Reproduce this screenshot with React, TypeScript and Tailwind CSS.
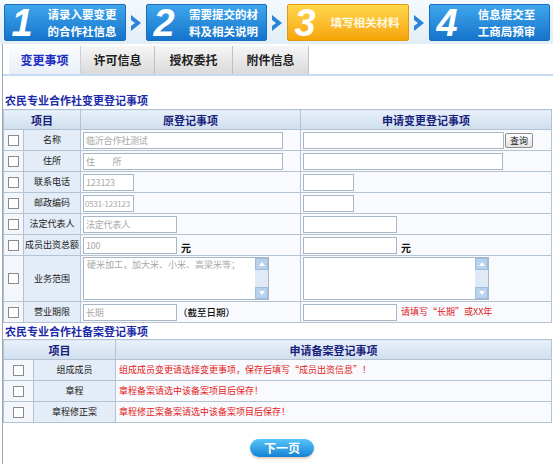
import React from "react";

const font = { fontFamily: '"Noto Sans CJK SC", "Liberation Sans", sans-serif' };

function Chevron() {
  return (
    <div className="w-[20px] flex items-center justify-center">
      <svg width="14" height="20" viewBox="0 0 14 20">
        <path d="M2 2 L12 10 L2 18 L2 13 L6 10 L2 7 Z" fill="#2a86d8" />
      </svg>
    </div>
  );
}

function Step({ n, lines, width, orange }: { n: string; lines: string[]; width: string; orange?: boolean }) {
  return (
    <div
      className={`${width} h-[37px] flex items-center rounded-[2px] border ${
        orange
          ? "bg-gradient-to-b from-[#ffd84a] to-[#f7a400] border-[#e09a10]"
          : "bg-gradient-to-b from-[#3fa6ec] to-[#1474cc] border-[#1a6cbc]"
      }`}
    >
      <span
        className="w-[34px] text-center text-[38px] leading-none font-bold italic text-white"
        style={{ fontFamily: '"Liberation Sans", sans-serif' }}
      >
        {n}
      </span>
      <div className={`flex-1 flex flex-col items-center text-[11.5px] leading-[17px] font-bold ${orange ? "text-[#fff8e0]" : "text-white"}`}>
        {lines.map((l) => (
          <span key={l}>{l}</span>
        ))}
      </div>
    </div>
  );
}

function Box() {
  return <span className="inline-block w-[11px] h-[11px] border border-[#8a8a8a] bg-white" />;
}

function Input({ w, value, small }: { w: string; value?: string; small?: boolean }) {
  return (
    <div
      className={`${w} h-[17px] border border-[#a9b6c4] bg-white ${small ? "text-[8px] px-[1px]" : "text-[9px] px-[2px]"} leading-[15px] text-[#a8a8a8] overflow-hidden whitespace-nowrap tracking-[-0.2px]`}
    >
      {value}
    </div>
  );
}

function TextArea({ value }: { value?: string }) {
  return (
    <div className="w-[186px] h-[43px] border border-[#a9b6c4] bg-white flex">
      <div className="flex-1 text-[9px] leading-[14px] text-[#a8a8a8] px-[3px] overflow-hidden whitespace-nowrap">{value}</div>
      <div className="w-[13px] bg-[#dfeaf6] flex flex-col justify-between">
        <div className="h-[12px] bg-[#b8d2ec] border border-[#9cbce0] flex items-center justify-center">
          <svg width="6" height="4" viewBox="0 0 6 4"><path d="M0 4 L3 0 L6 4 Z" fill="#fff" /></svg>
        </div>
        <div className="h-[12px] bg-[#b8d2ec] border border-[#9cbce0] flex items-center justify-center">
          <svg width="6" height="4" viewBox="0 0 6 4"><path d="M0 0 L3 4 L6 0 Z" fill="#fff" /></svg>
        </div>
      </div>
    </div>
  );
}

const th = "border border-[#b4c3d2] bg-gradient-to-b from-[#e9f1fa] to-[#cfdeee] text-[#17207a] text-[11px] leading-[14px] font-bold text-center";
const tdBox = "border border-[#b4c3d2] bg-[#f3f7fc] text-center";
const tdItem = "border border-[#b4c3d2] bg-[#e3ecf7] text-center text-[9px] leading-[12px] text-[#222] whitespace-nowrap";
const tdVal = "border border-[#b4c3d2] bg-[#f8fafd] px-[2px]";

type Row = { label: string; orig: React.ReactNode; next: React.ReactNode; h?: string };

export default function App() {
  const rows: Row[] = [
    {
      label: "名称",
      orig: <Input w="w-[200px]" value="临沂合作社测试" />,
      next: (
        <div className="flex items-center">
          <Input w="w-[201px]" />
          <span className="ml-[1px] h-[15px] px-[4px] border border-[#8e8e8e] rounded-[2px] bg-gradient-to-b from-white to-[#e2e2e2] text-[9px] leading-[13px] text-[#222]">查询</span>
        </div>
      ),
    },
    { label: "住所", orig: <Input w="w-[200px]" value="住　　所" />, next: <Input w="w-[200px]" /> },
    { label: "联系电话", orig: <Input w="w-[51px]" value="123123" />, next: <Input w="w-[51px]" /> },
    { label: "邮政编码", orig: <Input w="w-[51px]" value="0531-123123" small />, next: <Input w="w-[51px]" /> },
    { label: "法定代表人", orig: <Input w="w-[94px]" value="法定代表人" />, next: <Input w="w-[94px]" /> },
    {
      label: "成员出资总额",
      orig: (
        <div className="flex items-end gap-[4px]">
          <Input w="w-[94px]" value="100" />
          <span className="text-[10px] font-bold text-[#111] leading-[13px]">元</span>
        </div>
      ),
      next: (
        <div className="flex items-end gap-[4px]">
          <Input w="w-[94px]" />
          <span className="text-[10px] font-bold text-[#111] leading-[13px]">元</span>
        </div>
      ),
    },
    {
      label: "业务范围",
      orig: <TextArea value="硬米加工，加大米、小米、高梁米等；" />,
      next: <TextArea />,
      h: "h-[46px]",
    },
    {
      label: "营业期限",
      orig: (
        <div className="flex items-center gap-[1px]">
          <Input w="w-[94px]" value="长期" />
          <span className="text-[9.5px] font-medium text-[#111]">（截至日期）</span>
        </div>
      ),
      next: (
        <div className="flex items-center gap-[4px]">
          <Input w="w-[94px]" />
          <span className="text-[9px] text-[#e02020]">请填写“长期”或XX年</span>
        </div>
      ),
      h: "h-[21px]",
    },
  ];

  const rows2 = [
    { label: "组成成员", text: "组成成员变更请选择变更事项，保存后填写“成员出资信息”！" },
    { label: "章程", text: "章程备案请选中该备案项目后保存！" },
    { label: "章程修正案", text: "章程修正案备案请选中该备案项目后保存！" },
  ];

  return (
    <div className="w-[553px] h-[464px] bg-white overflow-hidden" style={font}>
      <div className="h-[44px] bg-gradient-to-b from-[#f4f9fd] to-[#e2eef8] flex items-center pl-[4px] pt-[1px]">
        <Step n="1" lines={["请录入要变更", "的合作社信息"]} width="w-[122px]" />
        <Chevron />
        <Step n="2" lines={["需要提交的材", "料及相关说明"]} width="w-[121px]" />
        <Chevron />
        <Step n="3" lines={["填写相关材料"]} width="w-[122px]" orange />
        <Chevron />
        <Step n="4" lines={["信息提交至", "工商局预审"]} width="w-[121px]" />
      </div>

      <div className="ml-[2px] border-l border-[#9aa8b8] h-[420px]">
        <div className="pt-[2px] pl-[6px] flex border-b-2 border-[#c8daf0] h-[32px]">
          <div className="w-[72px] flex items-center justify-center bg-gradient-to-b from-[#fafcff] to-[#e9eff6] border-r border-[#c8d0da] text-[12px] font-bold text-[#1b2cc0]">变更事项</div>
          <div className="w-[74px] flex items-center justify-center bg-gradient-to-b from-[#f6f6f6] to-[#dadada] border-r border-[#c0c0c0] text-[12px] font-bold text-[#222]">许可信息</div>
          <div className="w-[78px] flex items-center justify-center bg-gradient-to-b from-[#f6f6f6] to-[#dadada] border-r border-[#c0c0c0] text-[12px] font-bold text-[#222]">授权委托</div>
          <div className="w-[76px] flex items-center justify-center bg-gradient-to-b from-[#f6f6f6] to-[#dadada] border-r border-[#c0c0c0] text-[12px] font-bold text-[#222]">附件信息</div>
        </div>

        <div className="pt-[16px] pl-[2px] text-[11px] font-bold text-[#1b2aa8] leading-[17px]">农民专业合作社变更登记事项</div>
        <table className="w-[549px] border-collapse border border-[#8e9eae] table-fixed">
          <colgroup>
            <col className="w-[20px]" />
            <col className="w-[57px]" />
            <col className="w-[220px]" />
            <col />
          </colgroup>
          <thead>
            <tr className="h-[20px]">
              <th colSpan={2} className={th}>项目</th>
              <th className={th}>原登记事项</th>
              <th className={th}>申请变更登记事项</th>
            </tr>
          </thead>
          <tbody>
            {rows.map((r) => (
              <tr key={r.label} className={r.h ?? "h-[21px]"}>
                <td className={tdBox}><div className="flex justify-center"><Box /></div></td>
                <td className={tdItem}>{r.label}</td>
                <td className={tdVal}>{r.orig}</td>
                <td className={tdVal}>{r.next}</td>
              </tr>
            ))}
          </tbody>
        </table>

        <div className="pl-[2px] text-[11px] font-bold text-[#1b2aa8] leading-[16px]">农民专业合作社备案登记事项</div>
        <table className="w-[549px] border-collapse border border-[#8e9eae] table-fixed">
          <colgroup>
            <col className="w-[30px]" />
            <col className="w-[82px]" />
            <col />
          </colgroup>
          <thead>
            <tr className="h-[20px]">
              <th colSpan={2} className={th}>项目</th>
              <th className={th}>申请备案登记事项</th>
            </tr>
          </thead>
          <tbody>
            {rows2.map((r) => (
              <tr key={r.label} className="h-[21px]">
                <td className={tdBox}><div className="flex justify-center"><Box /></div></td>
                <td className={tdItem}>{r.label}</td>
                <td className={tdVal + " text-[9px] leading-[12px] text-[#e42020] pl-[3px]"}>{r.text}</td>
              </tr>
            ))}
          </tbody>
        </table>

        <div className="flex justify-center pt-[16px] pl-[8px]">
          <div className="w-[64px] h-[18px] rounded-full bg-gradient-to-b from-[#58c4f8] to-[#0f82d6] text-white text-[12px] font-bold leading-[18px] text-center shadow-[0_2px_2px_rgba(200,140,90,0.4)]">下一页</div>
        </div>
      </div>
    </div>
  );
}
